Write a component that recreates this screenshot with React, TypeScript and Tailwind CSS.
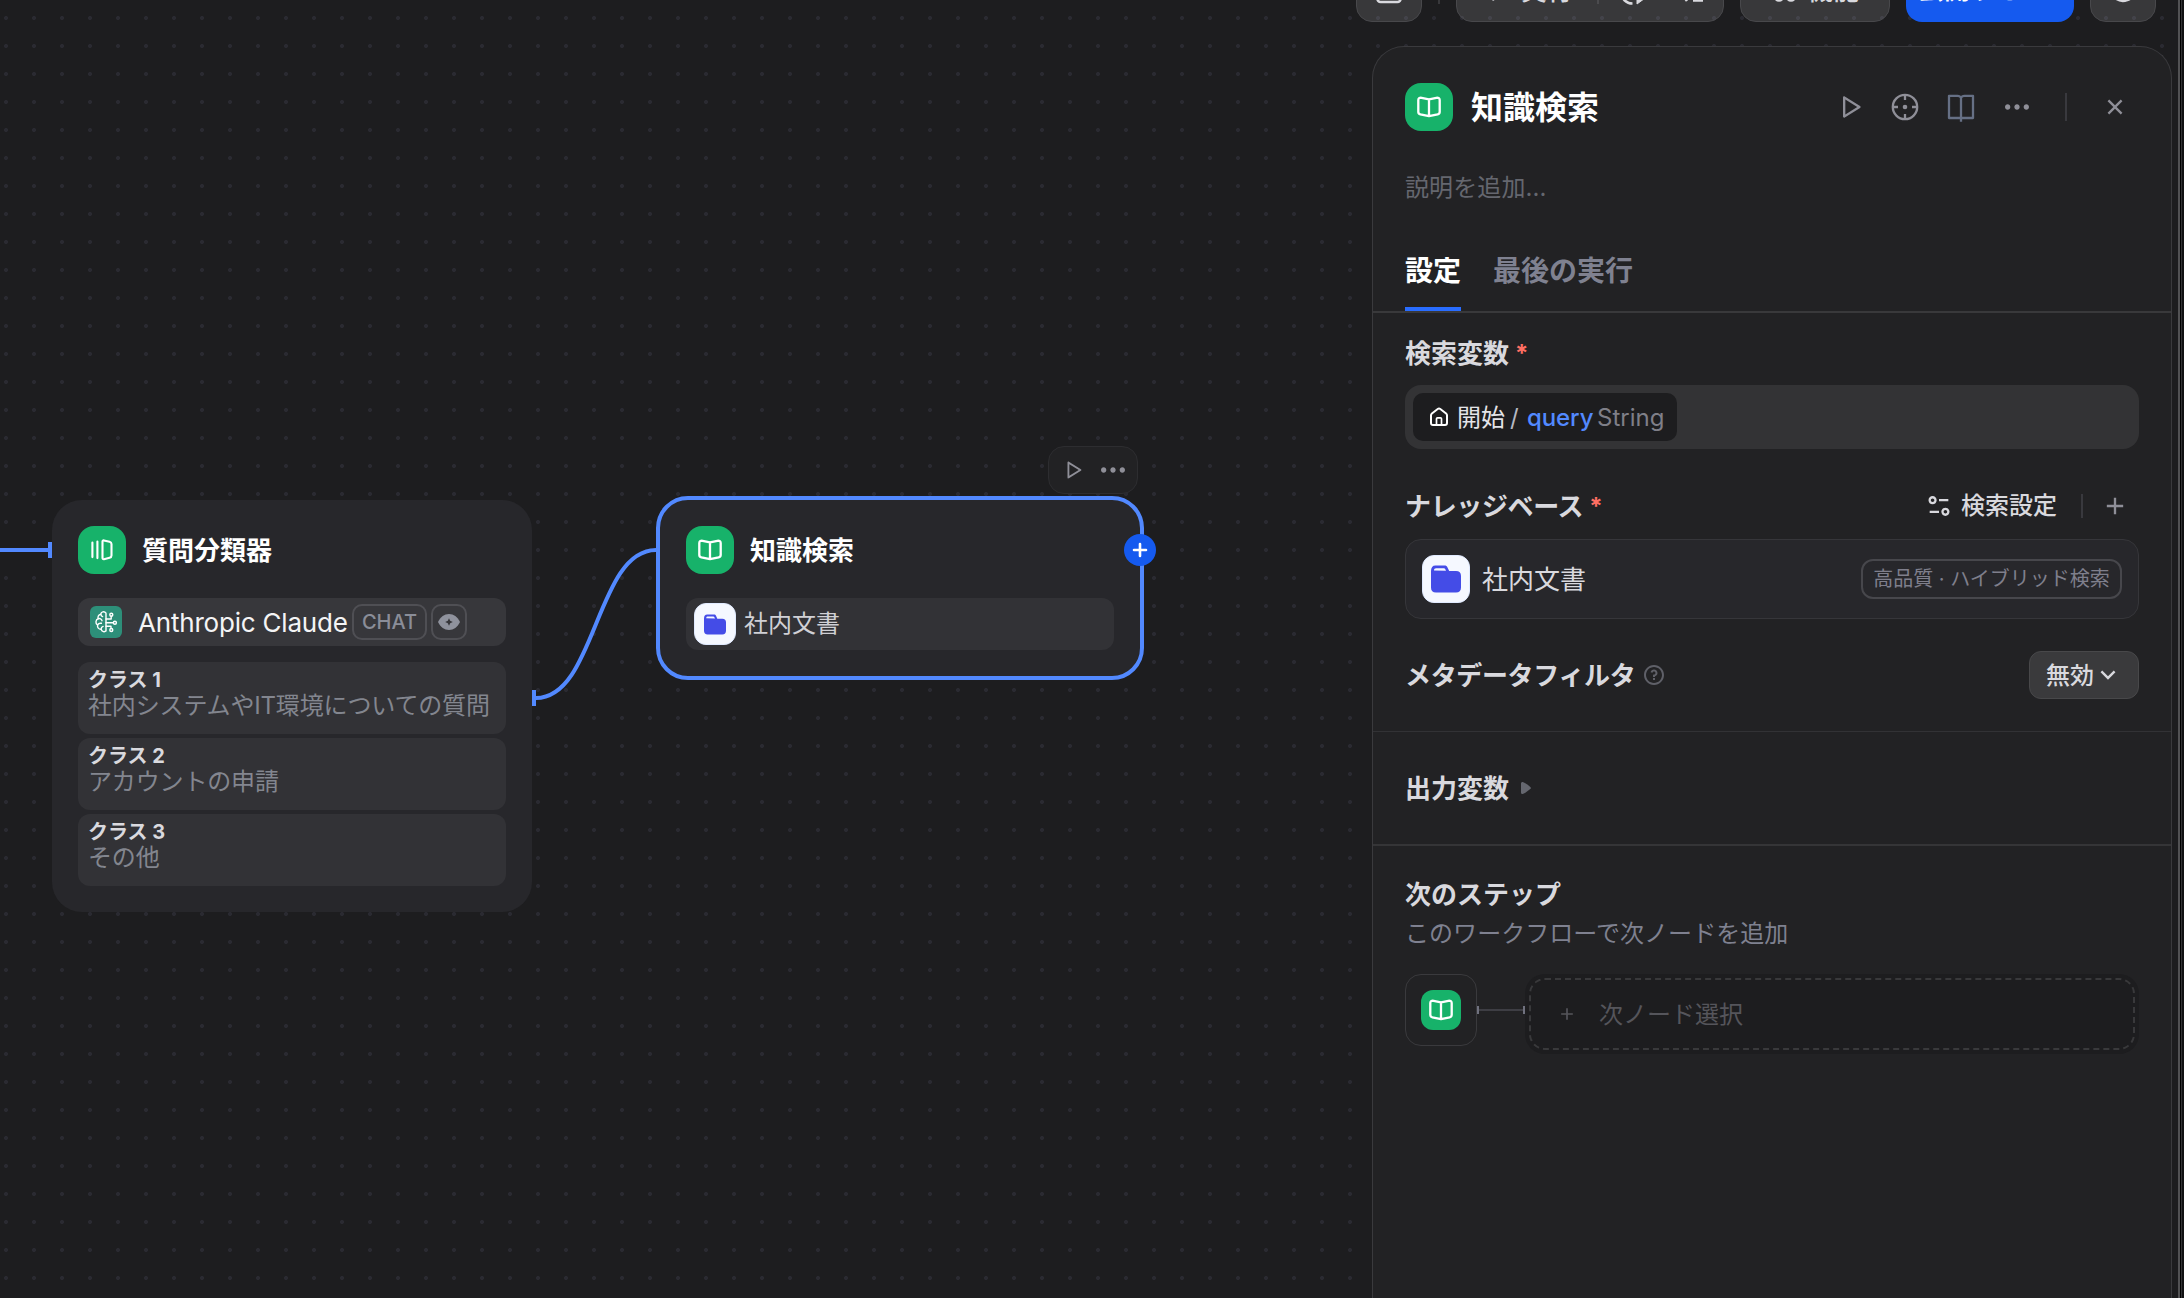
import type { ReactNode } from "react";
import {
  RiAddLine,
  RiArrowDownSLine,
  RiCloseLine,
  RiEqualizer2Line,
  RiMoreFill,
  RiPlayLargeLine,
  RiQuestionLine,
} from "react-icons/ri";

function BookGlyph() {
  return (
    <svg className="h-6 w-6" viewBox="0 0 24 24" fill="none" stroke="white" strokeWidth="2.3" strokeLinejoin="round" strokeLinecap="round">
      <path d="M12 4.3 4.6 2.8C2.9 2.5 1.3 3.2 1.3 5v12c0 1.4.9 2 2.1 2.3L12 21.2l8.6-1.9c1.2-.3 2.1-.9 2.1-2.3V5c0-1.8-1.6-2.5-3.3-2.2L12 4.3V21" />
    </svg>
  );
}

function ClassifierGlyph() {
  return (
    <svg className="h-6 w-6" viewBox="0 0 24 24" fill="none" stroke="white" strokeWidth="2.1" strokeLinejoin="round" strokeLinecap="round">
      <path d="M2.4 4.5v14.6M7.4 3.5v16.6" />
      <path d="M12.5 3.5c0-.8.6-1.2 1.4-1.1l5.7 1.3c1.2.3 1.9 1 1.9 2.3v11.5c0 1.3-.7 2-1.9 2.3l-5.7 1.4c-.8.1-1.4-.3-1.4-1.1z" />
    </svg>
  );
}

function FolderGlyph({ className }: { className: string }) {
  return (
    <svg className={className} viewBox="0 0 30 28" fill="#444ce7">
      <path d="M0 6C0 2.5 1.5.5 4.5.5h9c1.5 0 2.4.6 3 1.9L18.200 6H25c3.300 0 5 1.700 5 5v11.500c0 3.300-1.700 5-5 5H5c-3.300 0-5-1.700-5-5z" />
      <path d="M3 5.600C3 4 3.700 3.200 5.200 3.200h7.300c.9 0 1.400.3 1.800 1.100l.7 1.500z" fill="#f5f8ff" />
    </svg>
  );
}

function BrainGlyph() {
  return (
    <svg className="h-6 w-6" viewBox="0 0 24 24" fill="none" stroke="white" strokeWidth="1.4" strokeLinecap="round" strokeLinejoin="round">
      <path d="M12 3.500v17.500M12 3.200C10.300.9 7 1.700 6.800 4.300 4.300 4.600 3.500 7 4.300 8.700 1.400 9.700 1.200 13.800 3.600 15c-.5 2.600 1.200 4.400 3.500 4.300.7 2.500 3.700 3.200 4.900 1.300" />
      <path d="M6.800 4.300c.1 1.200.7 2 1.800 2.300M4.300 8.700c1.500-.4 3.300.2 3.700 2M3.600 15c.8-1.500 2.200-2 3.800-1.700M7.100 19.300c0-1.500.7-2.500 2-2.900" />
      <path d="M12 9h5.200V6.300M12 12.800h7.200M12 16.300h5v2.200" />
      <circle cx="17.3" cy="4.8" r="1.5" />
      <circle cx="20.9" cy="12.8" r="1.5" />
      <circle cx="17.3" cy="20" r="1.5" />
    </svg>
  );
}

function CrosshairGlyph() {
  return (
    <svg className="h-7 w-7" viewBox="0 0 28 28" fill="none" stroke="currentColor" strokeWidth="2.3">
      <circle cx="14" cy="14" r="12.2" />
      <path d="M14 2v5M14 21v5M2 14h5M21 14h5" />
      <circle cx="14" cy="14" r="2.3" fill="currentColor" stroke="none" />
    </svg>
  );
}

function ManualGlyph() {
  return (
    <svg className="h-8 w-8" viewBox="0 0 32 32" fill="none" stroke="#667085" strokeWidth="2.3" strokeLinejoin="round">
      <path d="M16 6.800C15.300 5.200 14.200 4.800 12.500 4.800H4v22.200h24V4.800h-8.500c-1.700 0-2.800.4-3.500 2v24" />
    </svg>
  );
}

function HomeGlyph() {
  return (
    <svg className="h-5 w-5" viewBox="0 0 20 20" fill="none" stroke="white" strokeWidth="2" strokeLinejoin="round">
      <path d="M2 8.300c0-.8.300-1.300.9-1.800L8.700 2c.8-.6 1.800-.6 2.600 0l5.800 4.500c.6.500.9 1 .9 1.800V16c0 1.300-.7 2-2 2H4c-1.300 0-2-.7-2-2z" />
      <path d="M7.500 18v-6.200c0-.7.4-1 1-1h3c.6 0 1 .3 1 1V18" strokeWidth="1.7" />
    </svg>
  );
}

function GreenIcon({ children, size = "large" }: { children: ReactNode; size?: "large" | "small" }) {
  return (
    <span
      className={
        size === "large"
          ? "flex h-12 w-12 shrink-0 items-center justify-center rounded-2xl bg-[#17b26a]"
          : "flex h-10 w-10 shrink-0 items-center justify-center rounded-xl bg-[#17b26a]"
      }
    >
      {children}
    </span>
  );
}

const classes = [
  { name: "クラス 1", text: "社内システムやIT環境についての質問" },
  { name: "クラス 2", text: "アカウントの申請" },
  { name: "クラス 3", text: "その他" },
];

function ClassifierNode() {
  return (
    <section className="absolute left-[52px] top-[500px] h-[412px] w-[480px] rounded-[30px] bg-[#27272b] px-[26px] pt-[26px]">
      <header className="flex h-12 items-center gap-4">
        <GreenIcon>
          <ClassifierGlyph />
        </GreenIcon>
        <h2 className="pt-0.5 text-[26px] font-bold leading-8 text-white">質問分類器</h2>
      </header>
      <div className="mt-6 flex h-12 items-center rounded-xl bg-[#37373b] pl-3">
        <span className="flex h-8 w-8 items-center justify-center rounded-md bg-[#2d8f79]">
          <BrainGlyph />
        </span>
        <span className="ml-4 w-[214px] whitespace-nowrap text-[26px] tracking-[-0.2px] text-[#f4f4f5]">Anthropic Claude</span>
        <span className="flex h-9 w-[75px] items-center justify-center rounded-[10px] border-2 border-[#4f4f54] text-[20px] font-medium text-[#8a8d98]">
          CHAT
        </span>
        <span className="ml-1 flex h-9 w-9 items-center justify-center rounded-[10px] border-2 border-[#4f4f54]">
          <svg className="h-[18px] w-[22px]" viewBox="0 0 22 18">
            <path d="M0 9C2.500 3.700 6.300 1 11 1s8.500 2.700 11 8c-2.500 5.300-6.300 8-11 8S2.500 14.300 0 9z" fill="#8f929d" />
            <path d="m11 5.200 1.200 2.600L14.800 9l-2.600 1.200L11 12.800l-1.200-2.600L7.200 9l2.600-1.200z" fill="#37373b" />
          </svg>
        </span>
      </div>
      <div className="mt-4 flex flex-col gap-1">
        {classes.map((item) => (
          <div key={item.name} className="h-[72px] rounded-xl bg-[#323236] px-[10px] pt-[5px]">
            <div className="text-[20px] font-bold leading-[26px] text-[#d9d9de]">{item.name}</div>
            <div className="whitespace-nowrap text-[24px] leading-[26px] tracking-[-0.15px] text-[#83868f]">{item.text}</div>
          </div>
        ))}
      </div>
    </section>
  );
}

function RetrievalNode() {
  return (
    <section className="absolute left-[656px] top-[496px] h-[184px] w-[488px] rounded-[32px] border-4 border-[#5289ff] bg-[#27272b] px-[26px] pt-[26px]">
      <header className="flex h-12 items-center gap-4">
        <GreenIcon>
          <BookGlyph />
        </GreenIcon>
        <h2 className="pt-0.5 text-[26px] font-bold leading-8 text-white">知識検索</h2>
      </header>
      <div className="mt-6 flex h-[52px] items-center rounded-xl bg-[#323236] pl-2">
        <span className="flex h-[42px] w-[42px] items-center justify-center rounded-xl border border-[#e0eaff] bg-[#f5f8ff]">
          <FolderGlyph className="h-[21px] w-[22px]" />
        </span>
        <span className="ml-2 text-[24px] leading-8 text-[#d0d0d5]">社内文書</span>
      </div>
      <span className="absolute -right-4 top-[34px] flex h-8 w-8 items-center justify-center rounded-full bg-[#155aef]">
        <svg className="h-4 w-4" viewBox="0 0 16 16" stroke="white" strokeWidth="2.6" strokeLinecap="round">
          <path d="M8 2v12M2 8h12" />
        </svg>
      </span>
    </section>
  );
}

const toolButton = "flex h-16 items-center justify-center border border-[#48484b] bg-white/12 rounded-2xl text-[26px] font-medium text-[#d9d9de]";

function Toolbar() {
  return (
    <nav className="-mt-[42px] flex h-16 shrink-0 items-center gap-4">
      <div className={`${toolButton} w-[66px]`}>
        <svg className="h-8 w-8" viewBox="0 0 32 32" fill="none" stroke="currentColor" strokeWidth="2.6">
          <rect x="4.5" y="4" width="23" height="24" rx="3" />
          <path d="M10 22.500h12" />
        </svg>
      </div>
      <div className="h-7 w-0.5 bg-[#38383b]" />
      <div className={`${toolButton} w-[268px]`}>
        <span className="flex w-[140px] items-center gap-2 pl-7">
          <RiPlayLargeLine className="h-7 w-7" />
          <span>実行</span>
        </span>
        <span className="h-7 w-0.5 bg-[#4b4b4e]" />
        <span className="flex flex-1 items-center justify-between pl-[18px] pr-4 pt-1">
          <svg className="h-7 w-8" viewBox="0 0 32 28" fill="none" stroke="currentColor" strokeWidth="2.6">
            <path d="M27 13A11.500 11.500 0 1 0 15.500 25.500M15.500 7v7l4 2" />
            <path d="M20 16.500v9.500l7.500-5.500z" fill="currentColor" strokeWidth="1" />
          </svg>
          <svg className="h-7 w-7" viewBox="0 0 28 28" fill="none" stroke="currentColor" strokeWidth="2.6">
            <path d="M4 3h20M4 12h6M14 22.500h10M5 19l3 4" />
          </svg>
        </span>
      </div>
      <div className={`${toolButton} w-[150px] gap-2`}>
        <svg className="h-7 w-7" viewBox="0 0 28 28" fill="none" stroke="currentColor" strokeWidth="2.6">
          <circle cx="8" cy="8" r="4" />
          <circle cx="20" cy="8" r="4" />
          <circle cx="8" cy="20.5" r="4" />
          <circle cx="20" cy="20.5" r="4" />
        </svg>
        <span>機能</span>
      </div>
      <div className="flex h-16 w-[168px] items-center gap-1 rounded-2xl bg-[#155aef] pl-3 text-[26px] font-medium text-white">
        <span className="pb-0.5">公開する</span>
        <RiArrowDownSLine className="mb-2 h-7 w-7" />
      </div>
      <div className={`${toolButton} w-[66px]`}>
        <svg className="h-7 w-7" viewBox="0 0 28 28" fill="none" stroke="currentColor" strokeWidth="2.6">
          <path d="M4 7a12 11.500 0 1 1-2 7M3 2v6h6M14 8v7l4 2" />
        </svg>
      </div>
    </nav>
  );
}

function Label({ children, required = false, kana = false }: { children: ReactNode; required?: boolean; kana?: boolean }) {
  return (
    <span className="flex items-center pt-0.5 text-[26px] font-bold leading-8 text-[#d9d9de]">
      <span className={kana ? "tracking-[-0.35px]" : ""}>{children}</span>
      {required && <span className="ml-1.5 text-[24px] font-bold text-[#ff6f63]">*</span>}
    </span>
  );
}

function Panel() {
  return (
    <aside className="ml-4 mt-6 flex w-[800px] flex-1 flex-col rounded-t-[32px] border-x border-t border-[#3a3a3d] bg-[#222224] pt-9">
      <header className="flex h-12 items-center pl-8 pr-8">
        <GreenIcon>
          <BookGlyph />
        </GreenIcon>
        <h1 className="ml-[18px] flex-1 pt-0.5 text-[32px] font-bold leading-10 text-white">知識検索</h1>
        <div className="flex items-center text-[#8f8f98]">
          <RiPlayLargeLine className="h-7 w-7" />
          <span className="ml-[27px]">
            <CrosshairGlyph />
          </span>
          <span className="ml-[26px]">
            <ManualGlyph />
          </span>
          <RiMoreFill className="ml-6 h-8 w-8" />
          <span className="ml-8 h-7 w-0.5 bg-[#39393e]" />
          <RiCloseLine className="ml-[34px] mr-[10px] h-7 w-7" />
        </div>
      </header>
      <p className="mx-8 mt-[37px] h-[39px] text-[24px] leading-10 tracking-[0.1px] text-[#65676f]">説明を追加...</p>
      <nav className="mt-6 flex h-[82px] gap-8 border-b-2 border-[#39393b] px-8 text-[28px] font-bold leading-[80px]">
        <span className="h-20 border-b-4 border-[#296dff] text-white">設定</span>
        <span className="text-[#7f8190]">最後の実行</span>
      </nav>

      <div className="px-8">
        <div className="mt-4 flex h-12 items-center">
          <Label required>検索変数</Label>
        </div>
        <div className="mt-2 flex h-16 items-center rounded-2xl bg-[#333335] pl-2">
          <span className="flex h-12 w-[264px] items-center whitespace-nowrap rounded-[10px] bg-[#1d1d1f] pl-4 text-[24px]">
            <HomeGlyph />
            <span className="ml-2 pt-px text-[#e4e4e8]">開始</span>
            <span className="ml-[5px] w-[17px] pt-0.5 text-[#b5b8c2]">/</span>
            <span className="w-[70px] pt-0.5 font-medium tracking-[-0.1px] text-[#5289ff]">query</span>
            <span className="pt-0.5 text-[#7f7f88]">String</span>
          </span>
        </div>

        <div className="mt-[33px] flex h-12 items-center justify-between">
          <Label required kana>
            ナレッジベース
          </Label>
          <div className="flex items-center text-[24px] font-medium text-[#d9d9de]">
            <RiEqualizer2Line className="mr-2 h-7 w-7" />
            検索設定
            <span className="ml-6 h-6 w-0.5 bg-[#39393e]" />
            <RiAddLine className="ml-[18px] mr-[10px] h-7 w-7 text-[#8f8f98]" />
          </div>
        </div>
        <div className="mt-[9px] flex h-20 items-center rounded-2xl border border-[#36363a] bg-[#27272b] px-4">
          <span className="flex h-12 w-12 items-center justify-center rounded-xl border border-[#e0eaff] bg-[#f5f8ff]">
            <FolderGlyph className="h-7 w-[30px]" />
          </span>
          <span className="ml-3 flex-1 pt-0.5 text-[26px] leading-8 text-[#d9d9de]">社内文書</span>
          <span className="flex h-10 w-[261px] items-center justify-center whitespace-nowrap rounded-xl border-2 border-[#47474c] text-[20px] text-[#7f7f8c]">
            高品質 · ハイブリッド検索
          </span>
        </div>

        <div className="mt-8 flex h-12 items-center justify-between">
          <span className="flex items-center gap-[7px]">
            <Label kana>メタデータフィルタ</Label>
            <RiQuestionLine className="h-6 w-6 text-[#5f6068]" />
          </span>
          <span className="flex h-12 w-[110px] items-center rounded-xl border border-[#48484a] bg-[#3a3a3c] pl-4 text-[24px] font-medium text-[#d9d9de]">
            <span className="pt-0.5">無効</span>
            <RiArrowDownSLine className="h-7 w-7" />
          </span>
        </div>
      </div>

      <div className="mt-8 flex h-[113px] items-center gap-3 border-t border-[#323235] px-8">
        <Label>出力変数</Label>
        <svg className="h-3 w-[10px]" viewBox="0 0 10 12" fill="#65676f">
          <path d="M0 1.500C0 .5.800 0 1.700 0 4.500 1 7 3 9.500 5.200c.5.500.5 1.100 0 1.600C7 9 4.500 11 1.700 12 .8 12 0 11.500 0 10.500z" />
        </svg>
      </div>

      <div className="border-t-2 border-[#353537] px-8 pt-8">
        <div className="flex h-8">
          <Label>次のステップ</Label>
        </div>
        <p className="mt-2 text-[24px] leading-8 tracking-[0.05px] text-[#7f8190]">このワークフローで次ノードを追加</p>
        <div className="mt-6 flex">
          <div className="flex h-[72px] w-[72px] items-center justify-center rounded-2xl border border-[#3a3a3d]">
            <GreenIcon size="small">
              <BookGlyph />
            </GreenIcon>
          </div>
          <div className="flex h-[72px] w-12 items-center">
            <span className="h-2 w-0.5 bg-[#70727f]" />
            <span className="h-0.5 flex-1 bg-[#3e3e44]" />
            <span className="h-2 w-0.5 bg-[#70727f]" />
          </div>
          <div className="h-20 flex-1 rounded-[20px] bg-[#1d1d1f] p-1">
            <div className="flex h-full items-center rounded-2xl border-2 border-dashed border-[#39393b] pl-[26px] text-[24px] text-[#55555b]">
              <RiAddLine className="h-5 w-5" />
              <span className="ml-[22px] pt-0.5">次ノード選択</span>
            </div>
          </div>
        </div>
      </div>
    </aside>
  );
}

export default function App() {
  return (
    <div
      lang="ja"
      className="flex h-[1298px] w-[2184px] overflow-hidden bg-[#1d1d1f] bg-[radial-gradient(circle_at_6px_18px,#2a2a31_1.7px,transparent_2.3px)] bg-[size:28px_28px] font-['Inter','Noto_Sans_CJK_JP',sans-serif]"
    >
      <main className="relative w-[1356px] shrink-0">
        <svg className="absolute left-0 top-0 h-full w-full" viewBox="0 0 1356 1298" fill="none" stroke="#5289ff" strokeWidth="4">
          <path d="M0 550H52" />
          <path d="M536 698C596 698 596 550 656 550" />
          <path d="M50 542v16M534 690v16" />
        </svg>
        <ClassifierNode />
        <div className="absolute left-[1048px] top-[446px] flex h-12 w-[90px] items-center justify-between rounded-2xl border border-[#2d2d30] bg-[#222224] px-3 pl-[13px] text-[#8f8f98]">
          <RiPlayLargeLine className="h-[22px] w-[22px]" />
          <RiMoreFill className="-mr-1 h-8 w-8" />
        </div>
        <RetrievalNode />
      </main>
      <div className="flex w-[822px] shrink-0 flex-col">
        <Toolbar />
        <Panel />
      </div>
      <div className="flex w-1.5 shrink-0 border-l-2 border-[#525254] bg-[#111112]">
        <span className="w-px bg-black" />
        <span className="w-px bg-[#333335]" />
      </div>
    </div>
  );
}
